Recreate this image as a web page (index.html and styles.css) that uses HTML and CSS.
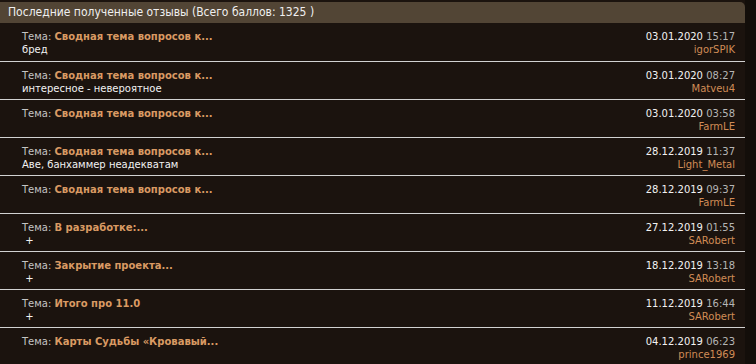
FILE: index.html
```html
<!DOCTYPE html>
<html lang="ru">
<head>
    <meta charset="UTF-8">
    <title>Последние полученные отзывы</title>
    <link rel="stylesheet" href="styles.css">
</head>
<body>

    <!-- Reputation feedback list -->
    <div class="panel">
        <div class="panel-head">Последние полученные отзывы (Всего баллов: 1325 )</div>

        <ul class="reviews">
            <li class="review">
                <div class="review-main">
                    <div><span class="label">Тема:</span> <a class="topic" href="#">Сводная тема вопросов к...</a></div>
                    <div class="comment">бред</div>
                </div>
                <div class="review-meta">
                    <div><span class="date">03.01.2020</span> <span class="time">15:17</span></div>
                    <a class="user" href="#">igorSPIK</a>
                </div>
            </li>
            <li class="review">
                <div class="review-main">
                    <div><span class="label">Тема:</span> <a class="topic" href="#">Сводная тема вопросов к...</a></div>
                    <div class="comment">интересное - невероятное</div>
                </div>
                <div class="review-meta">
                    <div><span class="date">03.01.2020</span> <span class="time">08:27</span></div>
                    <a class="user" href="#">Matveu4</a>
                </div>
            </li>
            <li class="review">
                <div class="review-main">
                    <div><span class="label">Тема:</span> <a class="topic" href="#">Сводная тема вопросов к...</a></div>
                    <div class="comment"></div>
                </div>
                <div class="review-meta">
                    <div><span class="date">03.01.2020</span> <span class="time">03:58</span></div>
                    <a class="user" href="#">FarmLE</a>
                </div>
            </li>
            <li class="review">
                <div class="review-main">
                    <div><span class="label">Тема:</span> <a class="topic" href="#">Сводная тема вопросов к...</a></div>
                    <div class="comment">Аве, банхаммер неадекватам</div>
                </div>
                <div class="review-meta">
                    <div><span class="date">28.12.2019</span> <span class="time">11:37</span></div>
                    <a class="user" href="#">Light_Metal</a>
                </div>
            </li>
            <li class="review">
                <div class="review-main">
                    <div><span class="label">Тема:</span> <a class="topic" href="#">Сводная тема вопросов к...</a></div>
                    <div class="comment"></div>
                </div>
                <div class="review-meta">
                    <div><span class="date">28.12.2019</span> <span class="time">09:37</span></div>
                    <a class="user" href="#">FarmLE</a>
                </div>
            </li>
            <li class="review">
                <div class="review-main">
                    <div><span class="label">Тема:</span> <a class="topic" href="#">В разработке:...</a></div>
                    <div class="comment">&nbsp;+</div>
                </div>
                <div class="review-meta">
                    <div><span class="date">27.12.2019</span> <span class="time">01:55</span></div>
                    <a class="user" href="#">SARobert</a>
                </div>
            </li>
            <li class="review">
                <div class="review-main">
                    <div><span class="label">Тема:</span> <a class="topic" href="#">Закрытие проекта...</a></div>
                    <div class="comment">&nbsp;+</div>
                </div>
                <div class="review-meta">
                    <div><span class="date">18.12.2019</span> <span class="time">13:18</span></div>
                    <a class="user" href="#">SARobert</a>
                </div>
            </li>
            <li class="review">
                <div class="review-main">
                    <div><span class="label">Тема:</span> <a class="topic" href="#">Итого про 11.0</a></div>
                    <div class="comment">&nbsp;+</div>
                </div>
                <div class="review-meta">
                    <div><span class="date">11.12.2019</span> <span class="time">16:44</span></div>
                    <a class="user" href="#">SARobert</a>
                </div>
            </li>
            <li class="review">
                <div class="review-main">
                    <div><span class="label">Тема:</span> <a class="topic" href="#">Карты Судьбы «Кровавый...</a></div>
                    <div class="comment"></div>
                </div>
                <div class="review-meta">
                    <div><span class="date">04.12.2019</span> <span class="time">06:23</span></div>
                    <a class="user" href="#">prince1969</a>
                </div>
            </li>
        </ul>
    </div>

</body>
</html>
```

FILE: styles.css
```css
body {
    margin: 0;
    background-color: #130e0a;
    font-family: "DejaVu Sans", Verdana, sans-serif;
    font-size: 10px;
    color: #e8e8e8;
}

.panel {
    width: 745px;
    padding-top: 2px;
    background-color: #1b130e;
}

.panel-head {
    height: 21px;
    line-height: 21px;
    padding-left: 8px;
    background-color: #524535;
    border-top-right-radius: 5px;
    font-family: "DejaVu Sans Condensed", "DejaVu Sans", sans-serif;
    font-size: 12px;
    color: #f0f0f0;
}

.reviews {
    list-style: none;
    margin: 0;
    padding: 0;
}

.review {
    display: flex;
    justify-content: space-between;
    height: 38px;
    padding: 7px 10px 0 22px;
    box-sizing: border-box;
    line-height: 13px;
    border-bottom: 1px solid #d2d2d2;
}

.review:first-child {
    height: 39px;
}

.review-main,
.review-meta {
    display: flex;
    flex-direction: column;
}

.review-meta {
    align-items: flex-end;
}

.label {
    color: #c4c4c4;
}

.topic {
    color: #d99a63;
    font-weight: bold;
    text-decoration: none;
}

.comment {
    height: 13px;
    color: #f2f2f2;
}

.date {
    color: #f2f2f2;
}

.time {
    color: #b5b5b5;
}

.user {
    color: #d08c56;
    text-decoration: none;
}
```
